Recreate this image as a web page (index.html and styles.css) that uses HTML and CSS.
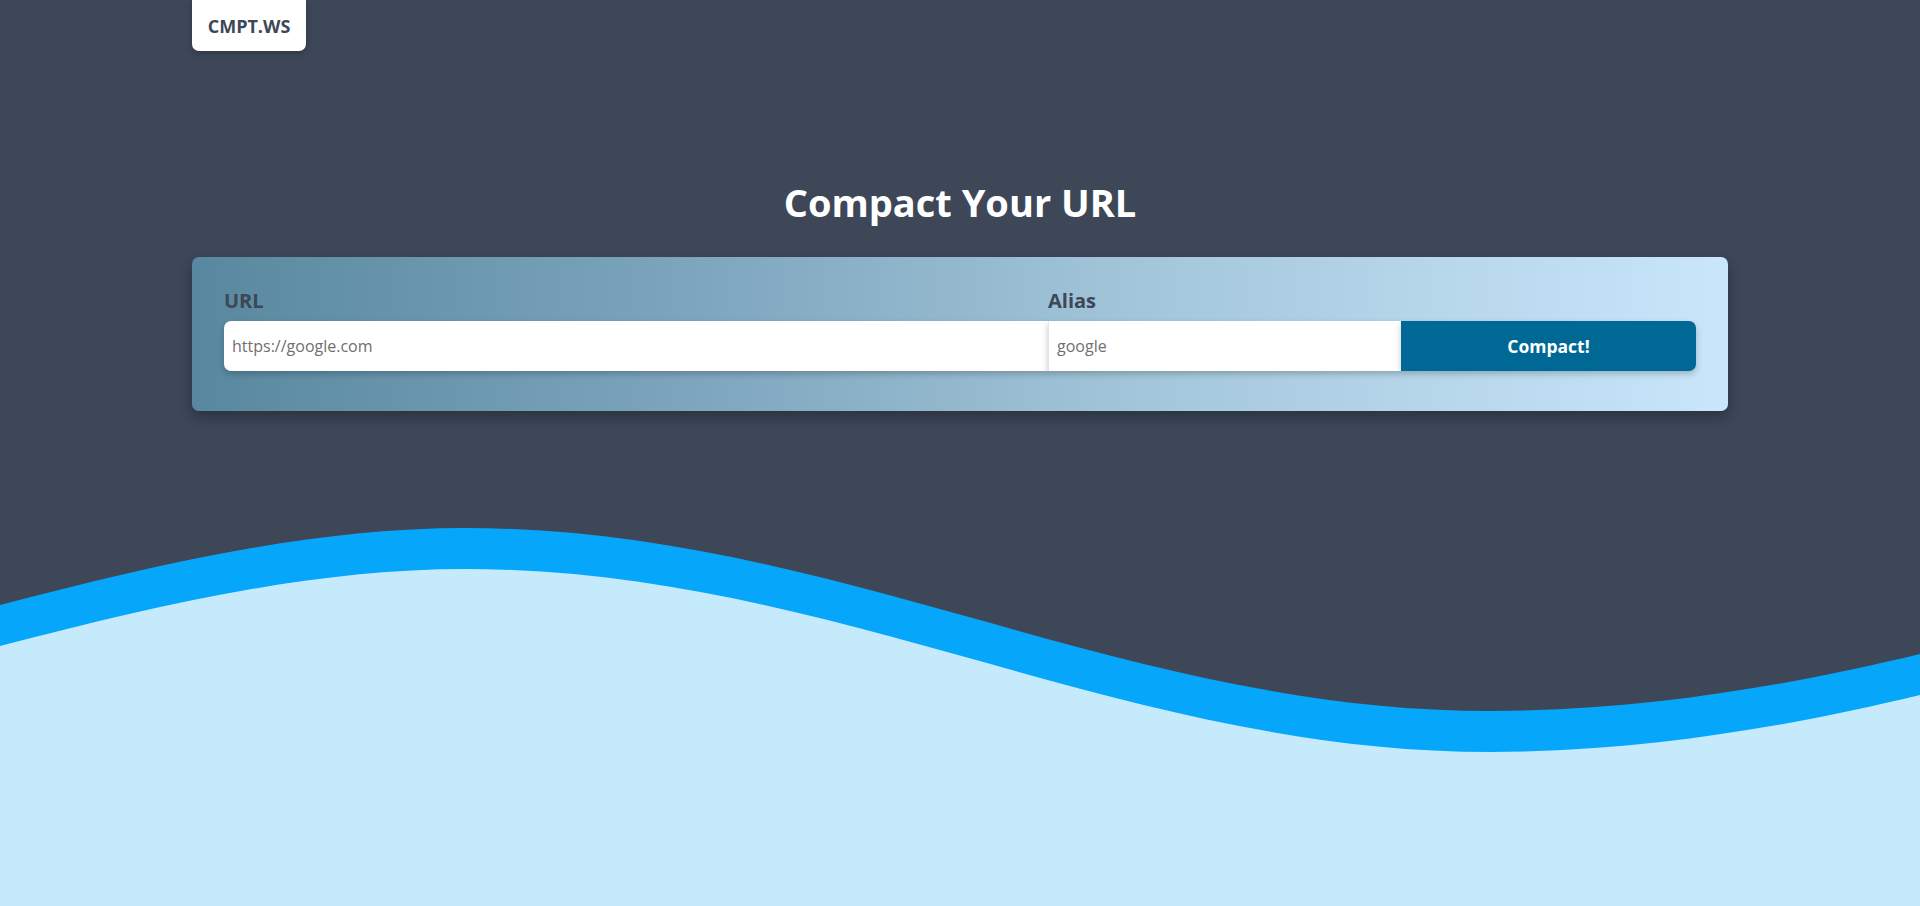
FILE: index.html
```html
<!DOCTYPE html>
<html lang="en">
<head>
<meta charset="utf-8">
<title>CMPT.WS</title>
<link rel="stylesheet" href="styles.css">
</head>
<body>
<svg class="wave" viewBox="0 500 1920 406" preserveAspectRatio="none" aria-hidden="true">
  <path class="wave-blue" d="M0 605 C155 565 310 528 465 528 C834 528 1121 711 1490 711 C1650 711 1800 683 1920 654 L1920 906 L0 906 Z"/>
  <path class="wave-light" d="M0 646 C155 606 310 569 465 569 C834 569 1121 752 1490 752 C1650 752 1800 724 1920 695 L1920 906 L0 906 Z"/>
</svg>
<div class="page">
  <header class="header">
    <a class="logo" href="#">CMPT.WS</a>
  </header>
  <h1 class="title">Compact Your URL</h1>
  <form class="card">
    <label class="label" for="url">URL</label>
    <label class="label" for="alias">Alias</label>
    <span></span>
    <input class="input input-url" id="url" type="text" placeholder="https://google.com">
    <input class="input input-alias" id="alias" type="text" placeholder="google">
    <button class="button" type="button">Compact!</button>
  </form>
</div>
</body>
</html>
```

FILE: styles.css
```css
html, body {
  margin: 0;
  padding: 0;
}
body {
  background: #3d4758;
  font-family: "Open Sans", "Noto Sans", sans-serif;
  height: 906px;
  overflow: hidden;
  position: relative;
}
.wave {
  position: absolute;
  left: 0;
  bottom: 0;
  width: 100%;
  height: 406px;
  display: block;
}
.wave-blue { fill: #06a6fb; }
.wave-light { fill: #c4eafc; }
.page {
  position: relative;
  width: 1536px;
  margin: 0 auto;
  display: flex;
  flex-direction: column;
}
.header {
  display: flex;
}
.logo {
  display: flex;
  align-items: center;
  justify-content: center;
  width: 114px;
  height: 51px;
  background: #ffffff;
  border-radius: 0 0 7px 7px;
  box-shadow: 0 2px 6px rgba(0, 0, 0, 0.25);
  color: #3d4758;
  font-weight: 700;
  font-size: 18px;
  text-decoration: none;
}
.title {
  margin: 129px 0 0;
  text-align: center;
  color: #ffffff;
  font-size: 38px;
  line-height: 1.2;
  font-weight: 700;
}
.card {
  margin-top: 31px;
  padding: 32px 32px 40px;
  border-radius: 7px;
  background: linear-gradient(90deg, #58889f 0%, #80a8c0 35%, #a7c9dd 65%, #c9e6fb 100%);
  box-shadow: 0 6px 14px rgba(0, 0, 0, 0.3);
  display: grid;
  grid-template-columns: 824fr 353fr 295fr;
  row-gap: 8px;
}
.label {
  color: #3d4758;
  font-weight: 700;
  font-size: 20px;
  line-height: 24px;
}
.input {
  height: 50px;
  box-sizing: border-box;
  border: 0;
  margin: 0;
  padding: 0 8px;
  background: #ffffff;
  font-family: "Open Sans", "Noto Sans", sans-serif;
  font-size: 16px;
  color: #333;
  outline: none;
  box-shadow: 0 3px 6px rgba(0, 0, 0, 0.22);
}
.input::placeholder {
  color: #6f6f6f;
}
.input-url {
  border-radius: 7px 0 0 7px;
}
.input-alias {
  border-left: 1px solid #e6e6e6;
}
.button {
  height: 50px;
  border: 0;
  margin: 0;
  border-radius: 0 7px 7px 0;
  background: #006895;
  color: #ffffff;
  font-family: "Open Sans", "Noto Sans", sans-serif;
  font-weight: 700;
  font-size: 17.5px;
  box-shadow: 0 3px 6px rgba(0, 0, 0, 0.22);
  cursor: pointer;
}
```
